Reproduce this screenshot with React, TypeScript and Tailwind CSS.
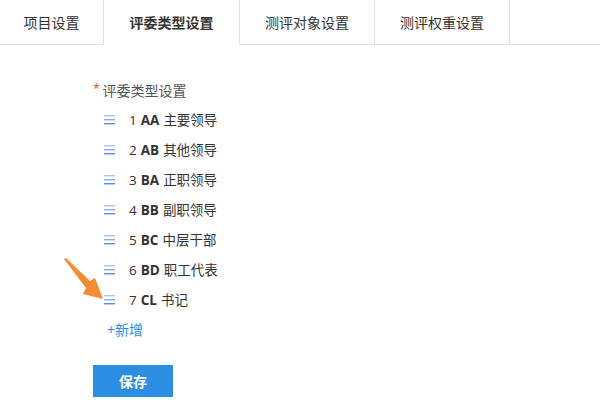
import React from "react";

const tabs = [
  { label: "项目设置", w: "w-[104px]", active: false },
  { label: "评委类型设置", w: "w-[136px]", active: true },
  { label: "测评对象设置", w: "w-[135px]", active: false },
  { label: "测评权重设置", w: "w-[135px]", active: false },
];

const items = [
  { n: 1, code: "AA", name: "主要领导" },
  { n: 2, code: "AB", name: "其他领导" },
  { n: 3, code: "BA", name: "正职领导" },
  { n: 4, code: "BB", name: "副职领导" },
  { n: 5, code: "BC", name: "中层干部" },
  { n: 6, code: "BD", name: "职工代表" },
  { n: 7, code: "CL", name: "书记" },
];

function DragIcon() {
  return (
    <svg width="12" height="10" viewBox="0 0 12 10" className="shrink-0">
      <rect x="0" y="0" width="11" height="1.4" fill="#a9c3ec" />
      <rect x="0" y="4" width="11" height="1.4" fill="#86abe6" />
      <rect x="0" y="8" width="11" height="1.4" fill="#5b8fdd" />
    </svg>
  );
}

export default function App() {
  return (
    <div
      className="relative w-[600px] h-[400px] bg-white overflow-hidden text-[#333]"
      style={{ fontFamily: '"Open Sans", "Noto Sans CJK SC", sans-serif' }}
    >
      <div className="flex h-[45px]">
        {tabs.map((t) => (
          <div
            key={t.label}
            className={`${t.w} flex items-center justify-center border-r border-[#e1e1e1] text-[14px] ${
              t.active ? "font-bold" : "border-b"
            }`}
          >
            {t.label}
          </div>
        ))}
        <div className="flex-1 border-b border-[#e1e1e1]" />
      </div>

      <div className="pl-[93px] pt-[35px]">
        <div className="flex items-center h-[20px] text-[14px] text-[#555]">
          <span className="text-[#ed4014] mr-[3px] text-[12px] leading-none relative top-[-1px]">*</span>
          <span>评委类型设置</span>
        </div>
        <div className="mt-[5px] pl-[11px]">
          {items.map((it) => (
            <div key={it.n} className="flex items-center h-[30px] text-[13.5px] text-[#333]">
              <DragIcon />
              <span className="ml-[13px]">{it.n}</span>
              <span className="ml-[4px] font-bold">{it.code}</span>
              <span className="ml-[4px]">{it.name}</span>
            </div>
          ))}
        </div>
        <div className="mt-[4px] pl-[14px] h-[20px] flex items-center text-[14px] text-[#2d8cf0]">
          +新增
        </div>
        <button className="mt-[26px] w-[80px] h-[32px] bg-[#2b8ee2] text-white text-[14px] font-bold">
          保存
        </button>
      </div>

      <svg
        className="absolute left-[60px] top-[255px]"
        width="50"
        height="50"
        viewBox="0 0 50 50"
      >
        <polygon
          points="4,4 6,3 30,26 35,23 43,44 23,39 26,33"
          fill="#f58b33"
        />
      </svg>
    </div>
  );
}
